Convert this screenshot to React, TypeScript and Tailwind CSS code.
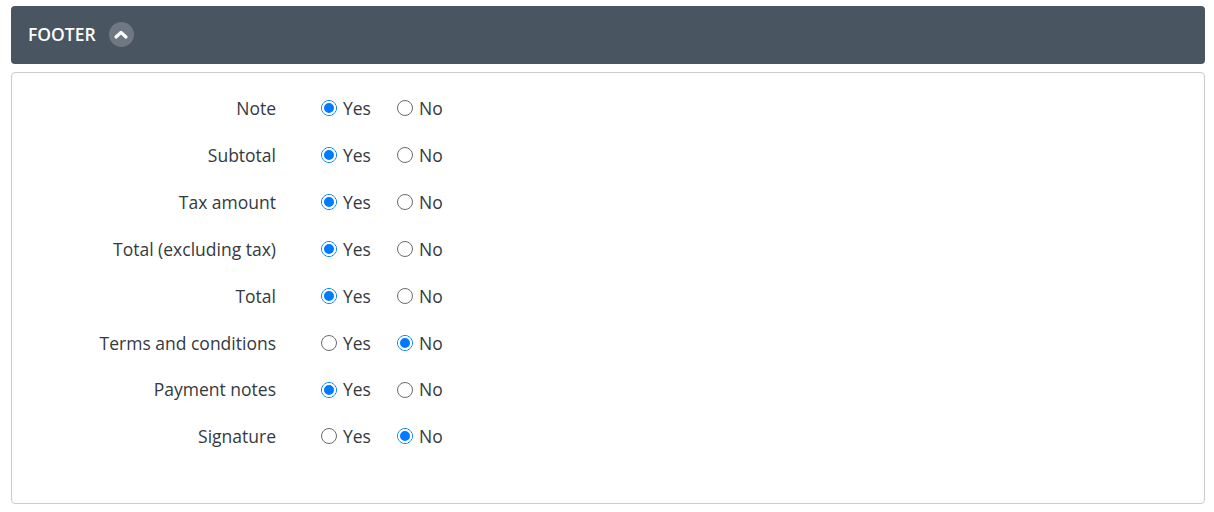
import { useState } from 'react';

const ROWS = [
  { label: 'Note', value: true },
  { label: 'Subtotal', value: true },
  { label: 'Tax amount', value: true },
  { label: 'Total (excluding tax)', value: true },
  { label: 'Total', value: true },
  { label: 'Terms and conditions', value: false },
  { label: 'Payment notes', value: true },
  { label: 'Signature', value: false },
];

function Radio({ checked, label, onClick }: { checked: boolean; label: string; onClick: () => void }) {
  return (
    <button type="button" onClick={onClick} className="flex items-center gap-[6px]">
      <span
        className={`flex h-4 w-4 items-center justify-center rounded-full border bg-white ${
          checked ? 'border-[#007bff] bg-[#007bff]' : 'border-[#6b6b6b]'
        }`}
      >
        {checked && <span className="h-[14px] w-[14px] rounded-full border-2 border-white bg-[#007bff]" />}
      </span>
      <span>{label}</span>
    </button>
  );
}

function Row({ label, value }: { label: string; value: boolean }) {
  const [on, setOn] = useState(value);
  return (
    <div className="flex h-[46.86px] items-center">
      <div className="w-[264px] text-right">{label}</div>
      <div className="ml-[45px] flex w-[76px]">
        <Radio checked={on} label="Yes" onClick={() => setOn(true)} />
      </div>
      <Radio checked={!on} label="No" onClick={() => setOn(false)} />
    </div>
  );
}

export default function App() {
  return (
    <div className="bg-white px-[11px] pt-[6px] pr-[9px] font-['Open_Sans',sans-serif] text-[17.5px] text-[#343a40]">
      {/* Section header */}
      <div className="flex h-[58px] items-center rounded bg-[#495561] pb-px pl-[17px]">
        <span className="text-[17.5px] font-semibold text-white">FOOTER</span>
        <span className="ml-[13px] flex h-[25px] w-[25px] items-center justify-center rounded-full bg-[#6f7882]">
          <svg width="16" height="11" viewBox="0 0 16 11" fill="none">
            <path d="M3 8 8 3.4 13 8" stroke="white" strokeWidth="3.2" strokeLinecap="round" strokeLinejoin="round" />
          </svg>
        </span>
      </div>

      {/* Options */}
      <div className="mt-2 h-[432px] rounded border border-[#cccccc] pt-[12px]">
        {ROWS.map((row) => (
          <Row key={row.label} label={row.label} value={row.value} />
        ))}
      </div>
    </div>
  );
}
